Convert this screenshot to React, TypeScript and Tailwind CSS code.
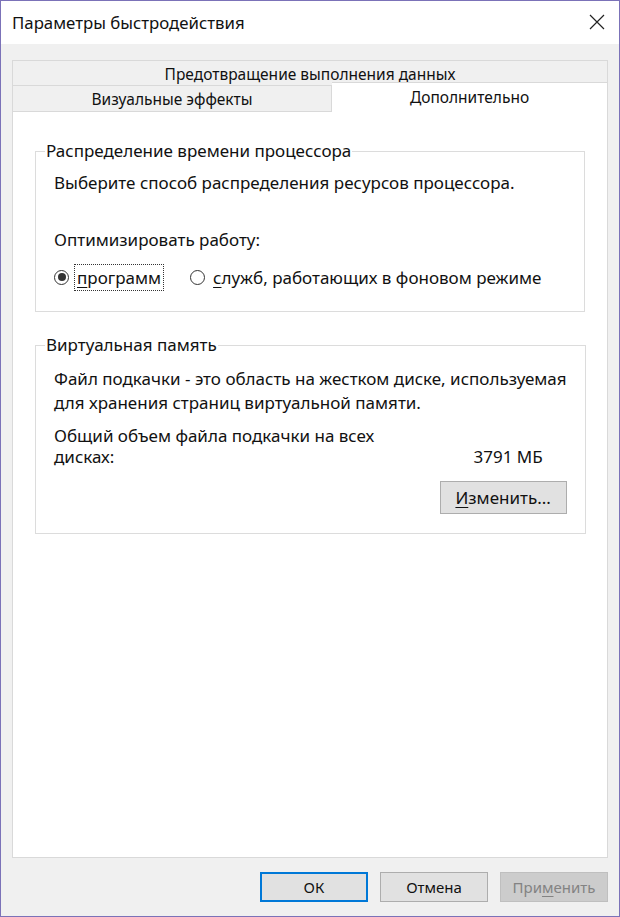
import { ReactNode } from "react";

const font = { fontFamily: '"Noto Sans", "Open Sans", sans-serif' };

function Radio({ checked, children, focused }: { checked?: boolean; children: ReactNode; focused?: boolean }) {
  return (
    <label className="flex items-center h-[22px]">
      <span className="w-[15px] h-[15px] rounded-full border border-[#333333] bg-white flex items-center justify-center shrink-0">
        {checked && <span className="w-[8px] h-[8px] rounded-full bg-[#333333]" />}
      </span>
      <span
        className={`ml-[5px] px-[2px] leading-[25px] ${
          focused ? "border border-dotted border-[#333333]" : "border border-transparent"
        }`}
      >
        {children}
      </span>
    </label>
  );
}

function Button({ children, primary, disabled, className = "" }: { children: ReactNode; primary?: boolean; disabled?: boolean; className?: string }) {
  return (
    <button
      className={`h-[30px] w-[108px] flex items-center justify-center text-[15px] ${
        disabled
          ? "bg-[#cccccc] border border-[#bfbfbf] text-[#838383]"
          : primary
          ? "bg-[#e1e1e1] border-2 border-[#0078d7] text-[#111]"
          : "bg-[#e1e1e1] border border-[#adadad] text-[#111]"
      } ${className}`}
    >
      {children}
    </button>
  );
}

export default function App() {
  return (
    <div
      className="w-[620px] h-[917px] border border-[#7b72b8] flex flex-col text-[#111] text-[17px]"
      style={font}
    >
      {/* заголовок окна */}
      <div className="h-[43px] bg-white flex items-center justify-between pl-[11px] pr-[14px]">
        <span className="text-[16.8px] text-[#111]">Параметры быстродействия</span>
        <svg width="16" height="16" viewBox="0 0 16 16" className="mt-[-1px]">
          <path d="M1 1 L15 15 M15 1 L1 15" stroke="#222" strokeWidth="1.2" fill="none" />
        </svg>
      </div>

      <div className="flex-1 bg-[#f0f0f0] px-[11px] pt-[16px] flex flex-col">
        {/* вкладки */}
        <div className="h-[26px] border border-[#d9d9d9] bg-[#f0f0f0] flex justify-center items-start leading-[26px] text-[15.5px]">
          Предотвращение выполнения данных
        </div>
        <div className="flex items-end mt-[-4px] text-[15.5px]">
          <div className="w-[320px] h-[27px] border border-[#d9d9d9] bg-[#f0f0f0] flex justify-center leading-[26px] relative">
            Визуальные эффекты
          </div>
          <div className="flex-1 h-[30px] border border-b-0 border-l-0 border-[#d9d9d9] bg-white flex justify-center leading-[28px] relative">
            Дополнительно
          </div>
        </div>

        {/* содержимое вкладки */}
        <div className="h-[746px] bg-white border border-t-0 border-[#d9d9d9] px-[22px] pt-[28px]">
          <fieldset className="border border-[#dcdcdc] pl-[18px] pr-[18px] pb-[23px]">
            <legend className="ml-[-9px] px-[1px] leading-[22px]">Распределение времени процессора</legend>
            <p className="mt-[10px] leading-[22px]">Выберите способ распределения ресурсов процессора.</p>
            <p className="mt-[35px] leading-[22px]">Оптимизировать работу:</p>
            <div className="mt-[15px] flex items-center gap-[26px]">
              <Radio checked focused>
                <span className="underline underline-offset-[3px] decoration-1">п</span>рограмм
              </Radio>
              <Radio>
                <span className="underline underline-offset-[3px] decoration-1">с</span>лужб, работающих в фоновом режиме
              </Radio>
            </div>
          </fieldset>

          <fieldset className="mt-[22px] border border-[#dcdcdc] pl-[18px] pr-[18px] pb-[19px]">
            <legend className="ml-[-9px] px-[1px] leading-[22px]">Виртуальная память</legend>
            <p className="mt-[11px] leading-[24px] whitespace-nowrap">
              Файл подкачки - это область на жестком диске, используемая
              <br />
              для хранения страниц виртуальной памяти.
            </p>
            <div className="mt-[10px] leading-[21px] pr-[24px]">
              <p>Общий объем файла подкачки на всех</p>
              <div className="flex justify-between">
                <span>дисках:</span>
                <span>3791 МБ</span>
              </div>
            </div>
            <div className="mt-[14px] flex justify-end">
              <button className="h-[33px] w-[127px] bg-[#e1e1e1] border border-[#adadad]">
                <span className="underline underline-offset-[3px] decoration-1">И</span>зменить...
              </button>
            </div>
          </fieldset>
        </div>

        {/* кнопки диалога */}
        <div className="mt-[14px] flex justify-end gap-[12px]">
          <Button primary>ОК</Button>
          <Button>Отмена</Button>
          <Button disabled>
            При<span className="underline underline-offset-[3px] decoration-1">м</span>енить
          </Button>
        </div>
      </div>
    </div>
  );
}
